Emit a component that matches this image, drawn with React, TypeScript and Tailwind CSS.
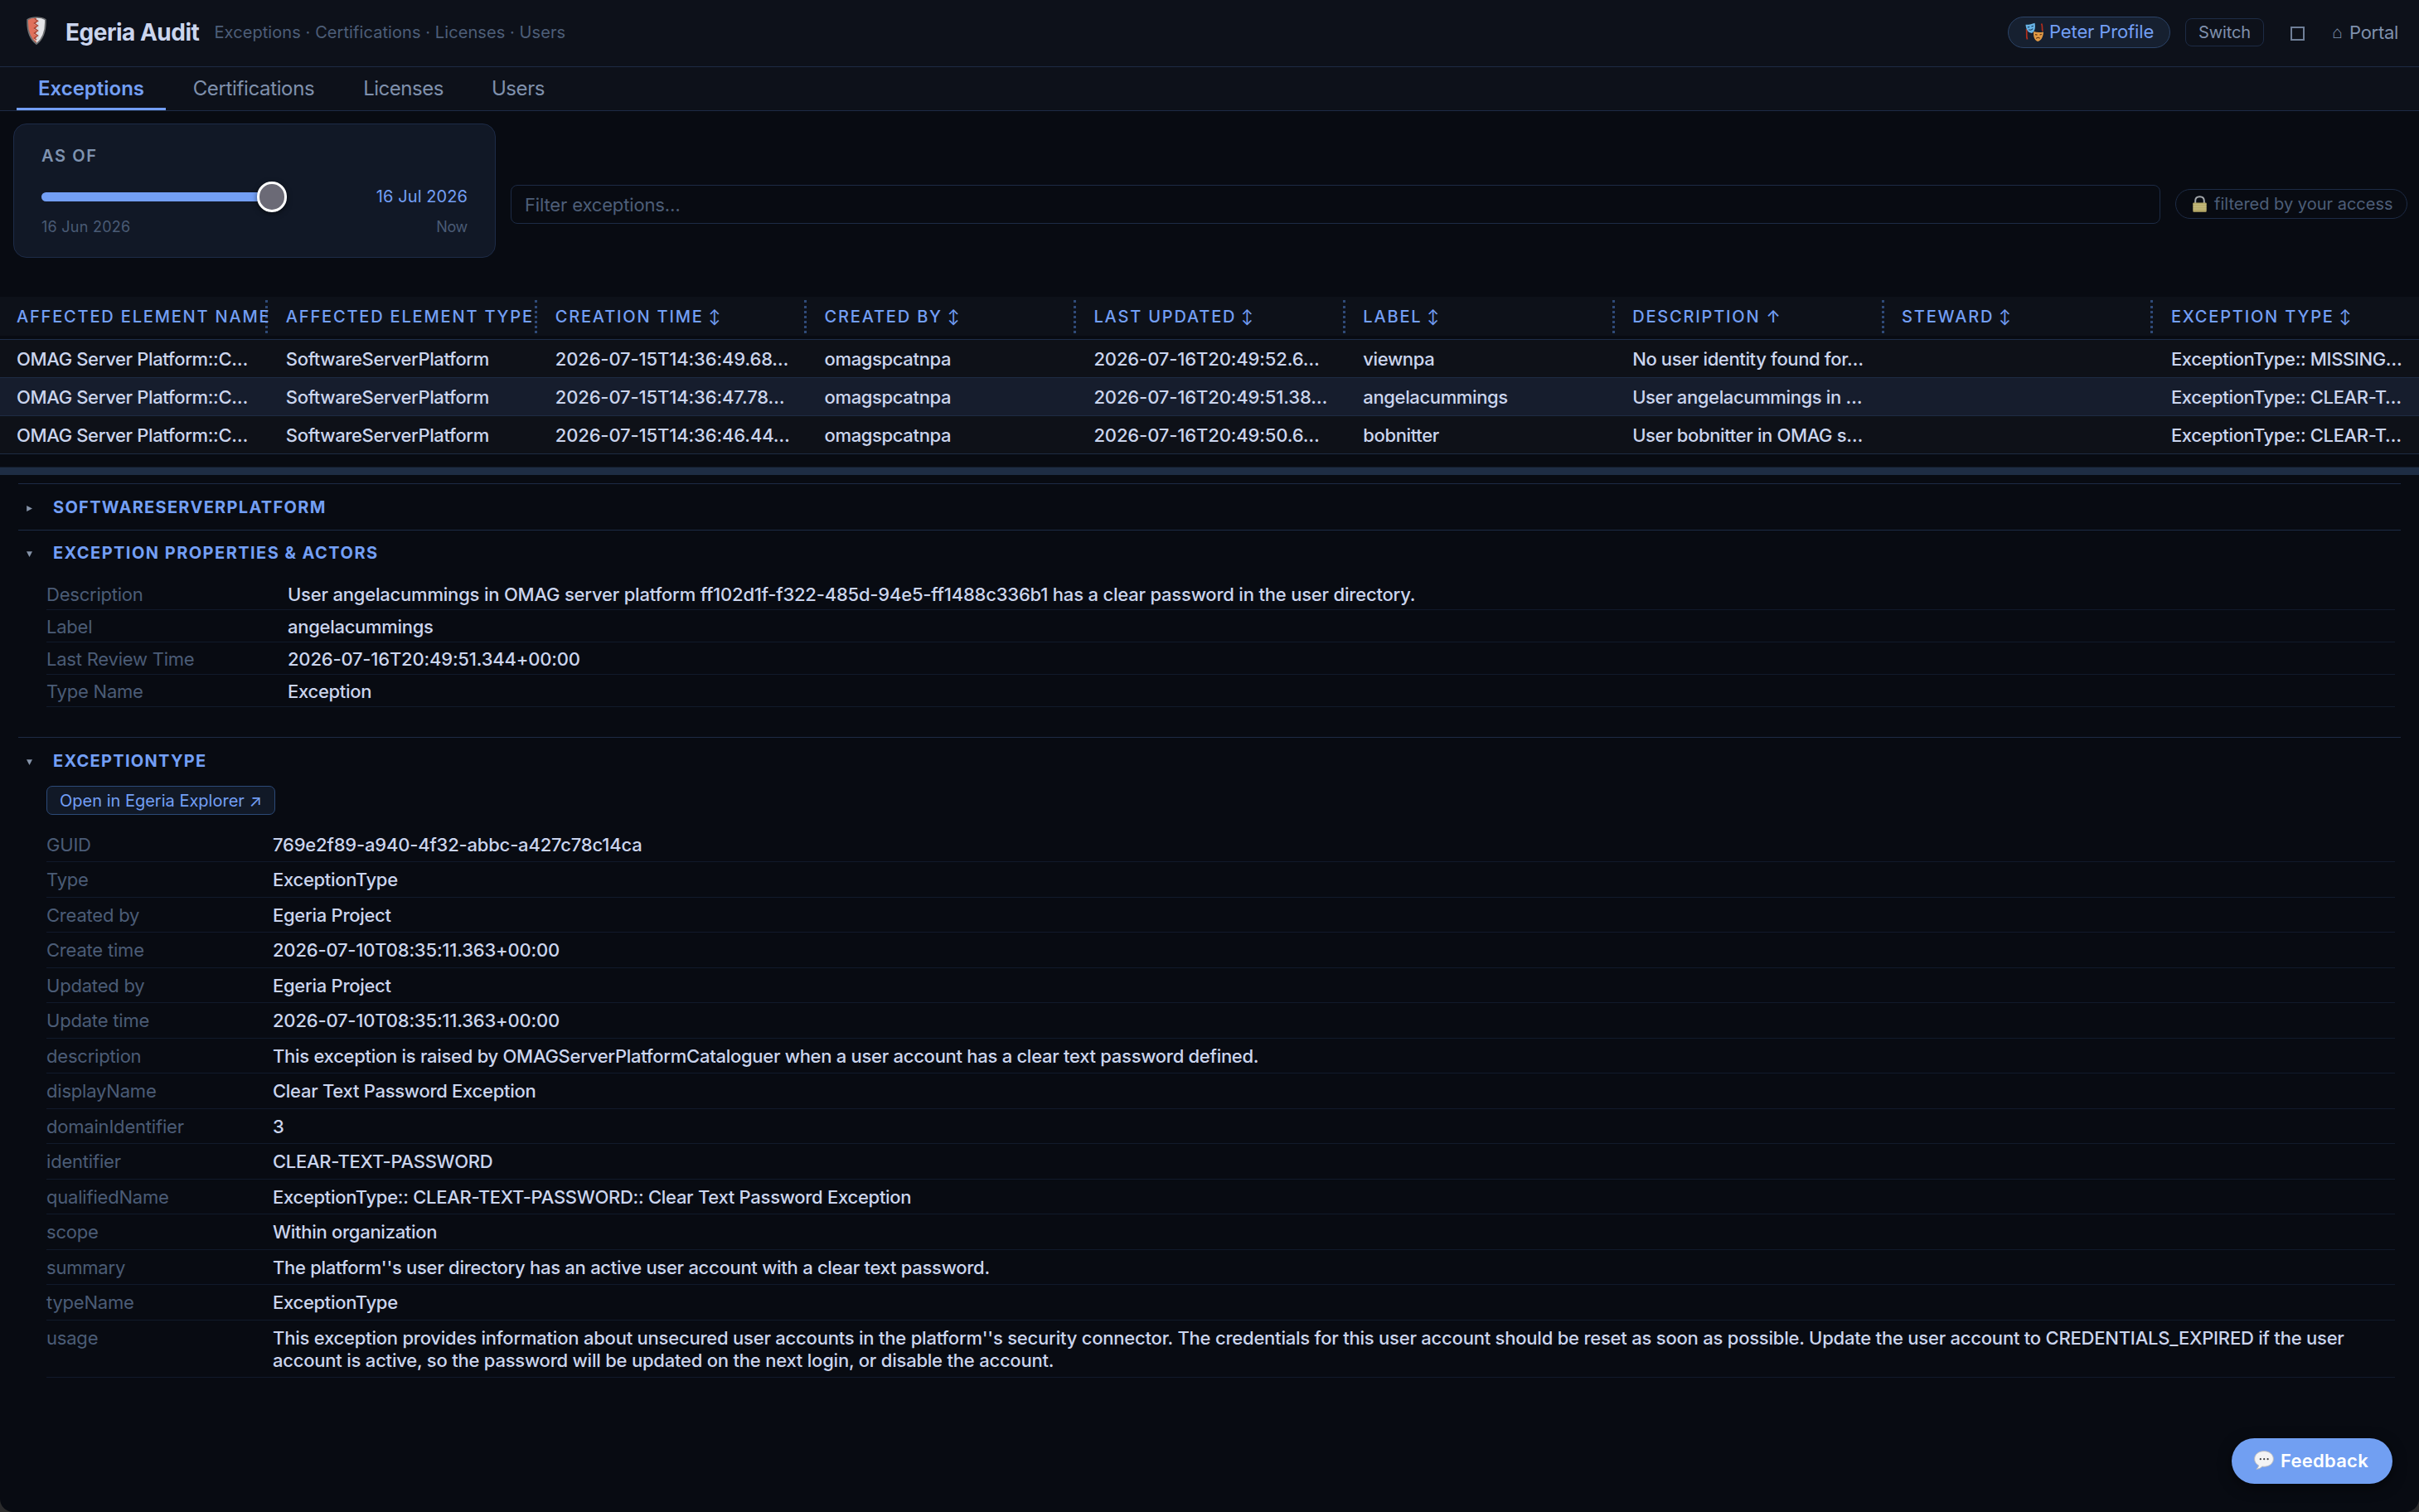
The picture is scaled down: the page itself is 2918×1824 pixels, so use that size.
import type { ReactNode } from "react";

const TABS = [
  { name: "Exceptions", cls: "w-[180px] border-[#739ff5] font-semibold text-[#739ff5]" },
  { name: "Certifications", cls: "w-[204px] border-transparent text-[#7f90ac] tracking-[-0.36px]" },
  { name: "Licenses", cls: "w-[149px] border-transparent text-[#7f90ac] tracking-[-0.5px]" },
  { name: "Users", cls: "w-[120px] border-transparent text-[#7f90ac] tracking-[-0.4px]" },
];

const COLUMNS: { name: string; sort: string }[] = [
  { name: "Affected Element Name", sort: "" },
  { name: "Affected Element Type", sort: "" },
  { name: "Creation Time", sort: "↕" },
  { name: "Created By", sort: "↕" },
  { name: "Last Updated", sort: "↕" },
  { name: "Label", sort: "↕" },
  { name: "Description", sort: "↑" },
  { name: "Steward", sort: "↕" },
  { name: "Exception Type", sort: "↕" },
];

const ROWS = [
  ["OMAG Server Platform::C…", "SoftwareServerPlatform", "2026-07-15T14:36:49.68…", "omagspcatnpa", "2026-07-16T20:49:52.6…", "viewnpa", "No user identity found for…", "", "ExceptionType:: MISSING…"],
  ["OMAG Server Platform::C…", "SoftwareServerPlatform", "2026-07-15T14:36:47.78…", "omagspcatnpa", "2026-07-16T20:49:51.38…", "angelacummings", "User angelacummings in …", "", "ExceptionType:: CLEAR-T…"],
  ["OMAG Server Platform::C…", "SoftwareServerPlatform", "2026-07-15T14:36:46.44…", "omagspcatnpa", "2026-07-16T20:49:50.6…", "bobnitter", "User bobnitter in OMAG s…", "", "ExceptionType:: CLEAR-T…"],
];

const PROPS = [
  ["Description", "User angelacummings in OMAG server platform ff102d1f-f322-485d-94e5-ff1488c336b1 has a clear password in the user directory."],
  ["Label", "angelacummings"],
  ["Last Review Time", "2026-07-16T20:49:51.344+00:00"],
  ["Type Name", "Exception"],
];

const DETAILS = [
  ["GUID", "769e2f89-a940-4f32-abbc-a427c78c14ca"],
  ["Type", "ExceptionType"],
  ["Created by", "Egeria Project"],
  ["Create time", "2026-07-10T08:35:11.363+00:00"],
  ["Updated by", "Egeria Project"],
  ["Update time", "2026-07-10T08:35:11.363+00:00"],
  ["description", "This exception is raised by OMAGServerPlatformCataloguer when a user account has a clear text password defined."],
  ["displayName", "Clear Text Password Exception"],
  ["domainIdentifier", "3"],
  ["identifier", "CLEAR-TEXT-PASSWORD"],
  ["qualifiedName", "ExceptionType:: CLEAR-TEXT-PASSWORD:: Clear Text Password Exception"],
  ["scope", "Within organization"],
  ["summary", "The platform''s user directory has an active user account with a clear text password."],
  ["typeName", "ExceptionType"],
];

const USAGE =
  "This exception provides information about unsecured user accounts in the platform''s security connector. The credentials for this user account should be reset as soon as possible. Update the user account to CREDENTIALS_EXPIRED if the user account is active, so the password will be updated on the next login, or disable the account.";

// Values made mostly of digits are set slightly wider than prose.
const valueTracking = (v: string) => (/^\d/.test(v) ? "tracking-[-0.19px]" : "tracking-[-0.28px]");

function ShieldIcon() {
  return (
    <svg className="h-[34px] w-[24px]" viewBox="0 0 24 34">
      <path d="M12 1C8 1 4 1.8 1.2 3.6 0.6 16 3 26 12 33Z" fill="#e0715c" />
      <path d="M12 1c4 0 8 .8 10.8 2.6C23.4 16 21 26 12 33Z" fill="#e4e5e8" />
      <path d="M9 3l5 3-5 3 5 3-5 3 5 3-5 3 5 3-5 3 3 3 3-3V3Z" fill="#d9dadd" />
      <path d="M9.500 2.500l4 2.700-4 2.800 4 3-4 3 4 3-4 3 4 3-4 3 2.500 2" fill="none" stroke="#a8412f" strokeWidth="1.400" />
      <path d="M12 1C8 1 4 1.800 1.200 3.600 0.600 16 3 26 12 33 21 26 23.400 16 22.800 3.600 20 1.800 16 1 12 1Z" fill="none" stroke="#6e7072" strokeWidth="1.700" />
    </svg>
  );
}

function MasksIcon() {
  return (
    <svg className="h-[24px] w-[23px]" viewBox="0 0 23 24">
      <path d="M1.500 8c1 4-.8 8 1 12.500M19.500 1.500c2 3 .2 5 1.500 9" fill="none" stroke="#b32d1c" strokeWidth="1.700" />
      <path d="M.5 2.800C4 3 8 2.200 11.500.8c1 5 .5 10-3.500 12.200C3 12.500 1 8 .5 2.800Z" fill="#68b4e6" />
      <path d="M2.800 6l2.400-.6M7.500 4.900l2.300-.7M4.200 8.800c2 .8 3.700.3 5-1.200" fill="none" stroke="#173a5c" strokeWidth="1.100" />
      <path d="M10.200 11c4 1.300 7.500 1.300 11.800.4-.2 5.500-2.500 10.500-7 11.600-4-1.700-5.500-6-4.800-12Z" fill="#e09a45" />
      <path d="M12 14.600l2.500.5M17.500 15l2.300-.6M13.300 19.500c1.500-1.600 3-1.600 4.300-.2" fill="none" stroke="#63320f" strokeWidth="1.100" />
    </svg>
  );
}

function LockIcon() {
  return (
    <svg className="h-[20px] w-[17px]" viewBox="0 0 17 20">
      <path d="M3.200 9V6.200C3.200 3 5.400 1.200 8.500 1.200s5.300 1.800 5.300 5V9" fill="none" stroke="#a3a7ab" strokeWidth="2" />
      <rect x="0.300" y="8.400" width="16.400" height="11.400" rx="1" fill="#b5a968" />
      <path d="M.5 11h16M.5 13.500h16M.5 16h16" stroke="#cfc68d" strokeWidth=".8" />
    </svg>
  );
}

function BubbleIcon() {
  return (
    <svg className="mb-[2px] h-[23px] w-[24px]" viewBox="0 0 24 23">
      <path d="M12 .6C5.500.600.600 4.600.600 10c0 3.400 1.900 6.200 4.900 7.800-.2 1.700-1.200 3.200-2.700 4.400 3 .1 5.500-1.300 7-3.100.7.100 1.500.2 2.200.2 6.500 0 11.400-4 11.400-9.300S18.500.600 12 .600Z" fill="#f4f4f5" stroke="#b9bbc0" strokeWidth="1" />
      <circle cx="7.800" cy="10.200" r="1.100" fill="#3c3d40" />
      <circle cx="12.200" cy="10.200" r="1.100" fill="#3c3d40" />
      <circle cx="16.600" cy="10.200" r="1.100" fill="#3c3d40" />
    </svg>
  );
}

function Caret({ open }: { open: boolean }) {
  return (
    <svg className="h-[7px] w-[7px] fill-[#8593a8]" viewBox="0 0 7 7">
      {open ? <path d="M0 .2h7L3.500 7Z" /> : <path d="M.2 0v7L7 3.500Z" />}
    </svg>
  );
}

function SectionTitle({ open, wide, children }: { open: boolean; wide?: boolean; children: ReactNode }) {
  return (
    <div className={`flex h-[56px] items-center border-t border-[#1d2b45] pl-[10px] ${wide ? "pb-[2px]" : ""}`}>
      <div className="mt-[3px] flex w-[32px]">
        <Caret open={open} />
      </div>
      <h2 className={`text-[20px] leading-[24px] font-bold text-[#739ff5] uppercase ${wide ? "tracking-[1.46px]" : "tracking-[1.3px]"}`}>{children}</h2>
    </div>
  );
}

export default function App() {
  return (
    <div className="h-[1824px] w-[2918px] bg-[#2b2b2c]">
      <div className="relative flex h-full flex-col overflow-hidden rounded-b-[16px] bg-[#080b12] font-['Inter',sans-serif] text-[22px] text-[#cbd5ee]">
        <header className="flex h-[81px] shrink-0 items-center border-b border-[#1d2b45] bg-[#0d111a] pr-[25px] pb-[2px] pl-[32px]">
          <div className="mb-[5px] flex w-[47px]">
            <ShieldIcon />
          </div>
          <h1 className="w-[179.500px] text-[28px] leading-[32px] font-bold tracking-[-0.5px] whitespace-nowrap">Egeria Audit</h1>
          <span className="text-[20px] tracking-[0.08px] text-[#4d5e78]">Exceptions · Certifications · Licenses · Users</span>
          <div className="ml-auto flex items-center">
            <div className="mb-px flex h-[38px] w-[196px] items-center rounded-full border border-[#2c4468] bg-[#162030] pl-[20px] text-[#739ff5]">
              <MasksIcon />
              <span className="ml-[6px] tracking-[-0.13px] whitespace-nowrap">Peter Profile</span>
            </div>
            <button className="ml-[18px] flex h-[34px] w-[95px] items-center justify-center rounded-[8px] border border-[#1d2b45] text-[20px] tracking-[-0.1px] text-[#7f90ac]">
              Switch
            </button>
            <span className="mt-[3px] ml-[32px] size-[17px] border-2 border-[#6f7f98]" aria-label="Toggle theme" />
            <span className="ml-[33px] flex items-center text-[#7f90ac]">
              <span className="w-[21px] text-[21px] leading-[24px]">⌂</span>
              <span className="tracking-[-0.3px]">Portal</span>
            </span>
          </div>
        </header>

        <nav className="flex h-[53px] shrink-0 gap-[4px] border-b border-[#1d2b45] bg-[#0d111a] pl-[20px]">
          {TABS.map((t) => (
            <button key={t.name} className={`flex items-center justify-center border-b-[3px] pt-[3px] text-[24px] ${t.cls}`}>
              {t.name}
            </button>
          ))}
        </nav>

        <div className="flex h-[224px] shrink-0 items-start pt-[15px] pr-[14px] pl-[16px]">
          <div className="flex h-[162px] w-[582px] flex-col rounded-[16px] border border-[#1d2b47] bg-[#111826] px-[33px] pt-[26px]">
            <div className="text-[20px] leading-[24px] font-semibold tracking-[1.6px] text-[#7f93b0]">AS OF</div>
            <div className="mt-[19px] flex h-[36px] items-center justify-between">
              <div className="relative h-[11px] w-[296px] rounded-full bg-[#739ff5]">
                <div className="absolute -top-[13px] right-0 h-[37px] w-[36px] rounded-full border-[3px] border-white bg-[#6b6a76] shadow-[0_2px_6px_rgba(0,0,0,0.5)]" />
              </div>
              <span className="text-[20px] tracking-[0.08px] text-[#739ff5]">16 Jul 2026</span>
            </div>
            <div className="mt-[7px] flex justify-between text-[18px] leading-[24px] tracking-[0.25px] text-[#4a5b75]">
              <span>16 Jun 2026</span>
              <span className="tracking-[-0.3px]">Now</span>
            </div>
          </div>
          <div className="mt-[74px] ml-[18px] flex h-[47px] w-[1990px] items-center rounded-[8px] border border-[#1d2b45] bg-[#080b12] pt-px pl-[16px] tracking-[-0.15px] text-[#4d5e78]">
            Filter exceptions…
          </div>
          <div className="mt-[79px] ml-[18px] flex h-[36px] flex-1 items-center rounded-full border border-[#1d2b45] pl-[20px] text-[20px] text-[#4d5e78]">
            <LockIcon />
            <span className="ml-[9px] whitespace-nowrap">filtered by your access</span>
          </div>
        </div>

        <div className="shrink-0">
          <div className="h-[52px] border-b border-[#1e2d49]">
            <div className="flex h-[47px] bg-[#0d1119]">
              {COLUMNS.map((c, i) => (
                <div key={c.name} className="relative flex w-[324.87px] shrink-0 items-center pl-[20px] text-[20px] font-medium tracking-[1.82px] whitespace-nowrap text-[#739ff5] uppercase">
                  {i < 8 && <span className="absolute top-[4px] right-[1.500px] h-[40px] border-r-[3px] border-dotted border-[#2f4a78]" />}
                  <span className="relative">{c.name}</span>
                  {c.sort && <span className={c.sort === "↑" ? "ml-[7px]" : "mt-[3px] ml-[6px] text-[17px]"}>{c.sort}</span>}
                </div>
              ))}
            </div>
          </div>
          {ROWS.map((r, i) => (
            <div key={i} className={`flex h-[46px] items-center overflow-hidden border-b border-[#1e2b43] pt-[2px] font-[450] ${i === 1 ? "bg-[#161d2d]" : "bg-[#0e1118]"}`}>
              {r.map((v, j) => (
                <div key={j} className={`w-[324.87px] shrink-0 pl-[20px] whitespace-nowrap ${j === 2 || j === 4 ? "tracking-[-0.13px]" : "tracking-[-0.36px]"}`}>
                  {v}
                </div>
              ))}
            </div>
          ))}
        </div>

        <div className="mt-[15px] h-[10px] shrink-0 border-t border-[#121a28] bg-[#1e2d44]" />

        <div className="mt-[10px] px-[22px]">
          <SectionTitle open={false}>SoftwareServerPlatform</SectionTitle>
          <SectionTitle open wide>Exception Properties &amp; Actors</SectionTitle>
          <div className="mt-[2px] mr-[7px] mb-[36px] ml-[34px]">
            {PROPS.map(([k, v]) => (
              <div key={k} className="flex h-[39px] items-center border-b border-[#111a2b] pt-[2px]">
                <span className="w-[291px] tracking-[-0.22px] text-[#4b5c76]">{k}</span>
                <span className={`font-[450] ${v.length > 40 ? "tracking-[-0.2px]" : valueTracking(v)}`}>{v}</span>
              </div>
            ))}
          </div>
          <SectionTitle open>ExceptionType</SectionTitle>
          <div className="mt-[3px] mr-[7px] ml-[34px]">
            <button className="flex h-[35px] w-[276px] items-center rounded-[7px] border border-[#2c4a78] bg-[#111927] pt-px pl-[15px] text-[20px] whitespace-nowrap text-[#739ff5]">
              Open in Egeria Explorer ↗
            </button>
            <div className="mt-[14.500px]">
              {DETAILS.map(([k, v]) => (
                <div key={k} className="flex h-[42.54px] items-center border-b border-[#111a2b] pt-[1.500px]">
                  <span className="w-[273px] tracking-[-0.2px] text-[#4b5c76]">{k}</span>
                  <span className={`font-[450] ${valueTracking(v)}`}>{v}</span>
                </div>
              ))}
              <div className="flex h-[69px] border-b border-[#111a2b] pt-[8px] leading-[27px]">
                <span className="w-[273px] shrink-0 tracking-[-0.2px] text-[#4b5c76]">usage</span>
                <span className="font-[450] tracking-[-0.218px]">{USAGE}</span>
              </div>
            </div>
          </div>
        </div>

        <button className="absolute right-[32px] bottom-[34px] flex h-[55px] w-[194px] items-center rounded-full bg-[#719ff2] pl-[27px] font-semibold tracking-[0.26px] text-white shadow-[0_4px_16px_rgba(0,0,0,0.5)]">
          <BubbleIcon />
          <span className="ml-[8px]">Feedback</span>
        </button>
      </div>
    </div>
  );
}
